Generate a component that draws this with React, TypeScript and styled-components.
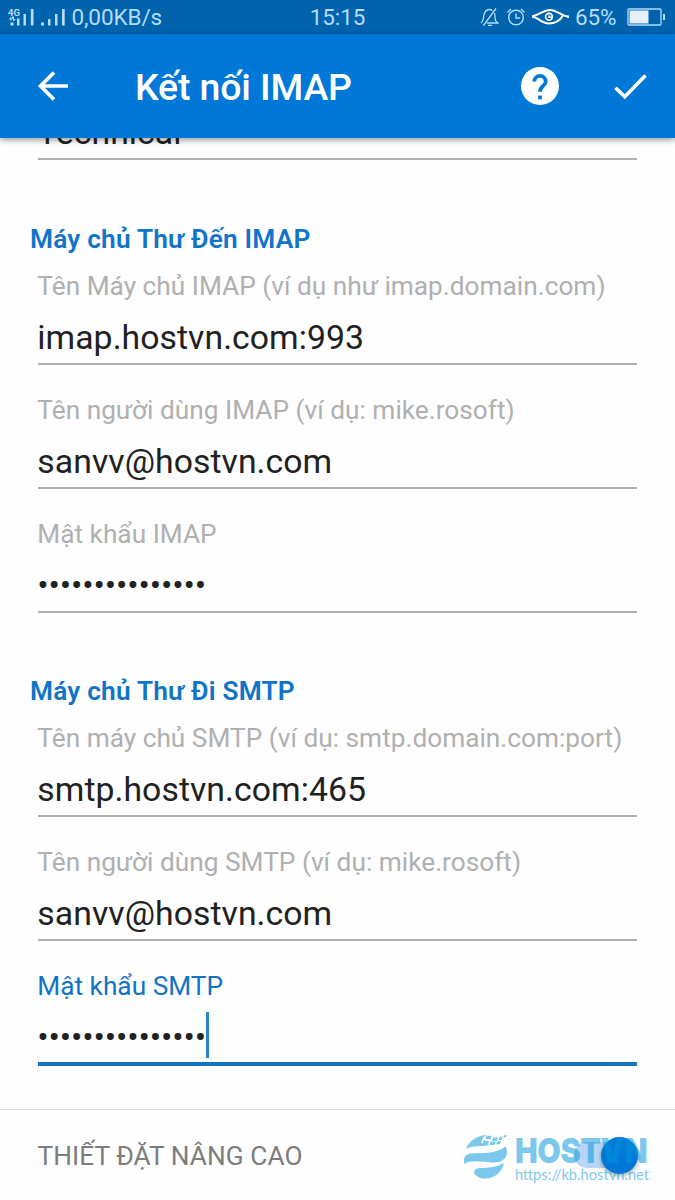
import React from 'react';
import styled, { createGlobalStyle } from 'styled-components';

const GlobalStyle = createGlobalStyle`
  * { box-sizing: border-box; }
  body { margin: 0; background: #fefefe; font-family: Roboto, sans-serif; }
`;

const Screen = styled.div`
  display: flex;
  flex-direction: column;
  width: 675px;
  height: 1200px;
  overflow: hidden;
  background: #fefefe;
`;

const StatusBar = styled.header`
  display: flex;
  align-items: center;
  flex: none;
  height: 34px;
  padding: 0 10px 0 8px;
  background: #0063ae;
  color: #b5dcf8;
  font-size: 22.5px;
  line-height: 34px;
  z-index: 2;
`;

const StatusSide = styled.div<{ $end?: boolean }>`
  display: flex;
  align-items: center;
  flex: 1;
  justify-content: ${(p) => (p.$end ? 'flex-end' : 'flex-start')};
`;

const StatusText = styled.span<{ $left?: number; $right?: number }>`
  margin: 0 ${(p) => p.$right ?? 0}px 0 ${(p) => p.$left ?? 0}px;
  letter-spacing: -0.1px;
  white-space: nowrap;
`;

const Glyph = styled.svg<{ $left?: number }>`
  display: block;
  flex: none;
  margin-left: ${(p) => p.$left ?? 0}px;
`;

const AppBar = styled.nav`
  display: flex;
  align-items: center;
  flex: none;
  height: 104px;
  padding: 0 27px 0 36px;
  background: #0078d7;
  color: #fff;
  box-shadow: 0 2px 6px rgba(0, 0, 0, 0.4);
  z-index: 2;
`;

const Title = styled.h1`
  flex: 1;
  margin: 0 0 0 65px;
  padding-top: 2px;
  font-size: 37.5px;
  font-weight: 500;
  letter-spacing: -0.15px;
  line-height: 44px;
`;

const Actions = styled.div`
  display: flex;
  align-items: center;
  gap: 53px;
`;

const Form = styled.main`
  flex: none;
  height: 972px;
  padding: 0 38px;
  border-bottom: 1px solid #dcdcdc;
`;

const FieldGroup = styled.section<{ $top: number }>`
  display: flex;
  flex-direction: column;
  gap: 29px;
  margin-top: ${(p) => p.$top}px;
`;

const SectionTitle = styled.h2`
  margin: 0 0 -14px -8px;
  color: #1174c8;
  font-size: 26.25px;
  font-weight: 600;
  letter-spacing: 0.2px;
  line-height: 32px;
`;

const FieldBox = styled.div<{ $active?: boolean }>`
  height: ${(p) => (p.$active ? 96 : 95)}px;
  border-bottom: ${(p) => (p.$active ? '4px solid #1173c7' : '2px solid #b0b0b0')};
`;

const Label = styled.label<{ $active?: boolean }>`
  display: block;
  margin: 0 0 14px -0.7px;
  color: ${(p) => (p.$active ? '#1173c7' : '#b0b0b0')};
  font-size: 26.25px;
  line-height: 32px;
  white-space: nowrap;
`;

const Value = styled.div<{ $masked?: boolean }>`
  display: flex;
  align-items: center;
  margin-left: ${(p) => (p.$masked ? -0.8 : -0.7)}px;
  color: #212121;
  font-size: 33.75px;
  letter-spacing: ${(p) => (p.$masked ? -0.13 : 0.05)}px;
  line-height: 44px;
  white-space: nowrap;
`;

const Caret = styled.span`
  width: 3px;
  height: 46px;
  margin: -4px 0 2px -0.5px;
  background: #2d82cb;
`;

const Advanced = styled.footer`
  position: relative;
  display: flex;
  align-items: center;
  justify-content: space-between;
  height: 90px;
  padding: 0 37px 0 37.5px;
  color: #7d7d7d;
  font-size: 26.25px;
`;

const AdvancedLabel = styled.span`
  padding-top: 2px;
  letter-spacing: 0.05px;
`;

const Track = styled.div`
  display: flex;
  align-items: center;
  justify-content: flex-end;
  width: 64px;
  height: 26px;
  border-radius: 13px;
  background: #b8d6f4;
`;

const Knob = styled.div`
  width: 37px;
  height: 37px;
  border-radius: 50%;
  background: #0078d7;
  box-shadow: 0 2px 4px rgba(0, 0, 0, 0.35);
`;

const Watermark = styled.div`
  position: absolute;
  left: 463px;
  top: 23px;
  display: flex;
  gap: 6px;
  color: #0096dc;
  opacity: 0.51;
`;

const Brand = styled.div`
  width: 134px;
  height: 34px;
  font-family: Inter, sans-serif;
  font-size: 34.5px;
  font-weight: 900;
  letter-spacing: -0.5px;
  line-height: 36px;
  white-space: nowrap;
  transform: scaleX(0.88);
  transform-origin: left;
`;

const BrandUrl = styled.div`
  font-family: Lato, sans-serif;
  font-size: 14.7px;
  line-height: 14px;
  white-space: nowrap;
`;

const dots = '•'.repeat(15);

type FieldProps = { label?: string; value: string; masked?: boolean; active?: boolean };

function Field({ label, value, masked, active }: FieldProps) {
  return (
    <FieldBox $active={active}>
      <Label $active={active}>{label ?? '\u00a0'}</Label>
      <Value $masked={masked}>
        {value}
        {active && <Caret />}
      </Value>
    </FieldBox>
  );
}

export default function App() {
  return (
    <>
      <GlobalStyle />
      <Screen>
        <StatusBar>
          <StatusSide>
            <Glyph width="58" height="22" viewBox="0 0 58 22" fill="currentColor">
              <text x="0" y="9.5" fontSize="9.5" fontWeight="700">4G</text>
              <path d="M1 13l2.500-2.500V15zM4 10.500h2V13h2l-3 2.500V13H4zM2.500 16.500h3v3h-3zM9 12.500h2.500v7H9zM15.500 8H18v11.500h-2.500zM22.800 3h2.700v16.500h-2.700zM33 16.500h3v3h-3zM40 13h2.500v6.500H40zM47 8h2.500v11.500H47zM54 3h2.700v16.500H54z" />
            </Glyph>
            <StatusText $left={5.5}>0,00KB/s</StatusText>
          </StatusSide>
          <StatusText $left={2}>15:15</StatusText>
          <StatusSide $end>
            <Glyph width="19" height="20" viewBox="0 0 19 20" fill="none" stroke="currentColor" strokeWidth="1.3">
              <path d="M1 16c3-2 2-5 3-8.500C5 4 7 2.500 9.500 2.500c1.200 0 2.200.4 3 1.200M14.500 6c1 2 0 5 1 7.500.4 1 1.300 1.700 2.500 2.500H7M16 1.500L3.500 18.500M8 18.300h4" />
            </Glyph>
            <Glyph $left={7} width="20" height="20" viewBox="0 0 20 20" fill="none" stroke="currentColor" strokeWidth="1.4">
              <circle cx="10" cy="10.500" r="7.300" />
              <path d="M10 6.500v4.500h4M1.500 5.500L5 2M18.500 5.500L15 2" />
            </Glyph>
            <Glyph $left={5} width="38" height="20" viewBox="0 0 38 20" fill="none" stroke="#fff" strokeWidth="2">
              <path d="M1 9.500C9 8 12 3 19 3s11 6 18 6.500v1.500M1 9.500c7 1 9 7 17 7 7 0 11-3 14-8" />
              <circle cx="18" cy="9.800" r="3.400" strokeWidth="1.600" />
              <path d="M18 8.300v2h3" strokeWidth="1.400" />
            </Glyph>
            <StatusText $left={6} $right={10.5}>65%</StatusText>
            <Glyph width="38" height="18" viewBox="0 0 38 18" fill="none" stroke="currentColor" strokeWidth="1.3">
              <rect x="1" y="1" width="33" height="16" rx="1" />
              <path d="M37 6v6" strokeWidth="2" />
              <path d="M2.500 2.500h19v13h-19z" fill="#e4f1fb" stroke="none" />
            </Glyph>
          </StatusSide>
        </StatusBar>
        <AppBar>
          <Glyph width="34" height="34" viewBox="0 0 34 34" fill="none" stroke="#fff" strokeWidth="3.6">
            <path d="M32 17H5M18 3.500L4.500 17 18 30.500" />
          </Glyph>
          <Title>Kết nối IMAP</Title>
          <Actions>
            <Glyph width="38" height="38" viewBox="0 0 38 38">
              <circle cx="19" cy="19" r="19" fill="#fff" />
              <path d="M13.300 14.500a5.700 5.700 0 0 1 11.400 0c0 4.500-5.700 4.500-5.700 10.300" fill="none" stroke="#0078d7" strokeWidth="3.800" />
              <path d="M17.100 28.500h3.800v3.800h-3.800z" fill="#0078d7" />
            </Glyph>
            <Glyph width="36" height="28" viewBox="0 0 36 28" fill="none" stroke="#fff" strokeWidth="3.600">
              <path d="M3.500 15.800l9.300 9L33.500 3.500" />
            </Glyph>
          </Actions>
        </AppBar>
        <Form>
          <FieldGroup $top={-73}>
            <Field value="Technical" />
          </FieldGroup>
          <FieldGroup $top={63}>
            <SectionTitle>Máy chủ Thư Đến IMAP</SectionTitle>
            <Field label="Tên Máy chủ IMAP (ví dụ như imap.domain.com)" value="imap.hostvn.com:993" />
            <Field label="Tên người dùng IMAP (ví dụ: mike.rosoft)" value="sanvv@hostvn.com" />
            <Field label="Mật khẩu IMAP" value={dots} masked />
          </FieldGroup>
          <FieldGroup $top={62}>
            <SectionTitle>Máy chủ Thư Đi SMTP</SectionTitle>
            <Field label="Tên máy chủ SMTP (ví dụ: smtp.domain.com:port)" value="smtp.hostvn.com:465" />
            <Field label="Tên người dùng SMTP (ví dụ: mike.rosoft)" value="sanvv@hostvn.com" />
            <Field label="Mật khẩu SMTP" value={dots} masked active />
          </FieldGroup>
        </Form>
        <Advanced>
          <AdvancedLabel>THIẾT ĐẶT NÂNG CAO</AdvancedLabel>
          <Track>
            <Knob />
          </Track>
          <Watermark>
            <Glyph width="46" height="48" viewBox="0 0 46 48" fill="currentColor">
              <path d="M3 16C6 8 13 3 23 2l-3 3-2 5 9 2C18 14 10 12 3 16z" />
              <path d="M1.500 31C0 25 2 21.500 8 20.500c10-1 25 1 34.500-7C46 20 43 27 36 29c-10 2-27-4-34.500 2z" />
              <path d="M11 40c0-4 3-5 7-5 8 0 16-1 23-5-2 9-9 15.500-19 15.500-5 0-9-2-11-5.500z" />
              <path d="M23.500 2.500l5 .5-1 3.500-5-.5zM30 4.500h5l-1 3.500h-5zM20.500 7.500l5.500.5-1 4-5.500-.5zM27.500 8.500h5l-1 3.500h-5zM36.500 4l3-.5-1 3.500h-3zM34 8.500l4-.5-1 3-4 .5zM41 2.500l3-.8-1 2.300-3 .5z" />
            </Glyph>
            <div>
              <Brand>HOSTVN</Brand>
              <BrandUrl>https://kb.hostvn.net</BrandUrl>
            </div>
          </Watermark>
        </Advanced>
      </Screen>
    </>
  );
}
